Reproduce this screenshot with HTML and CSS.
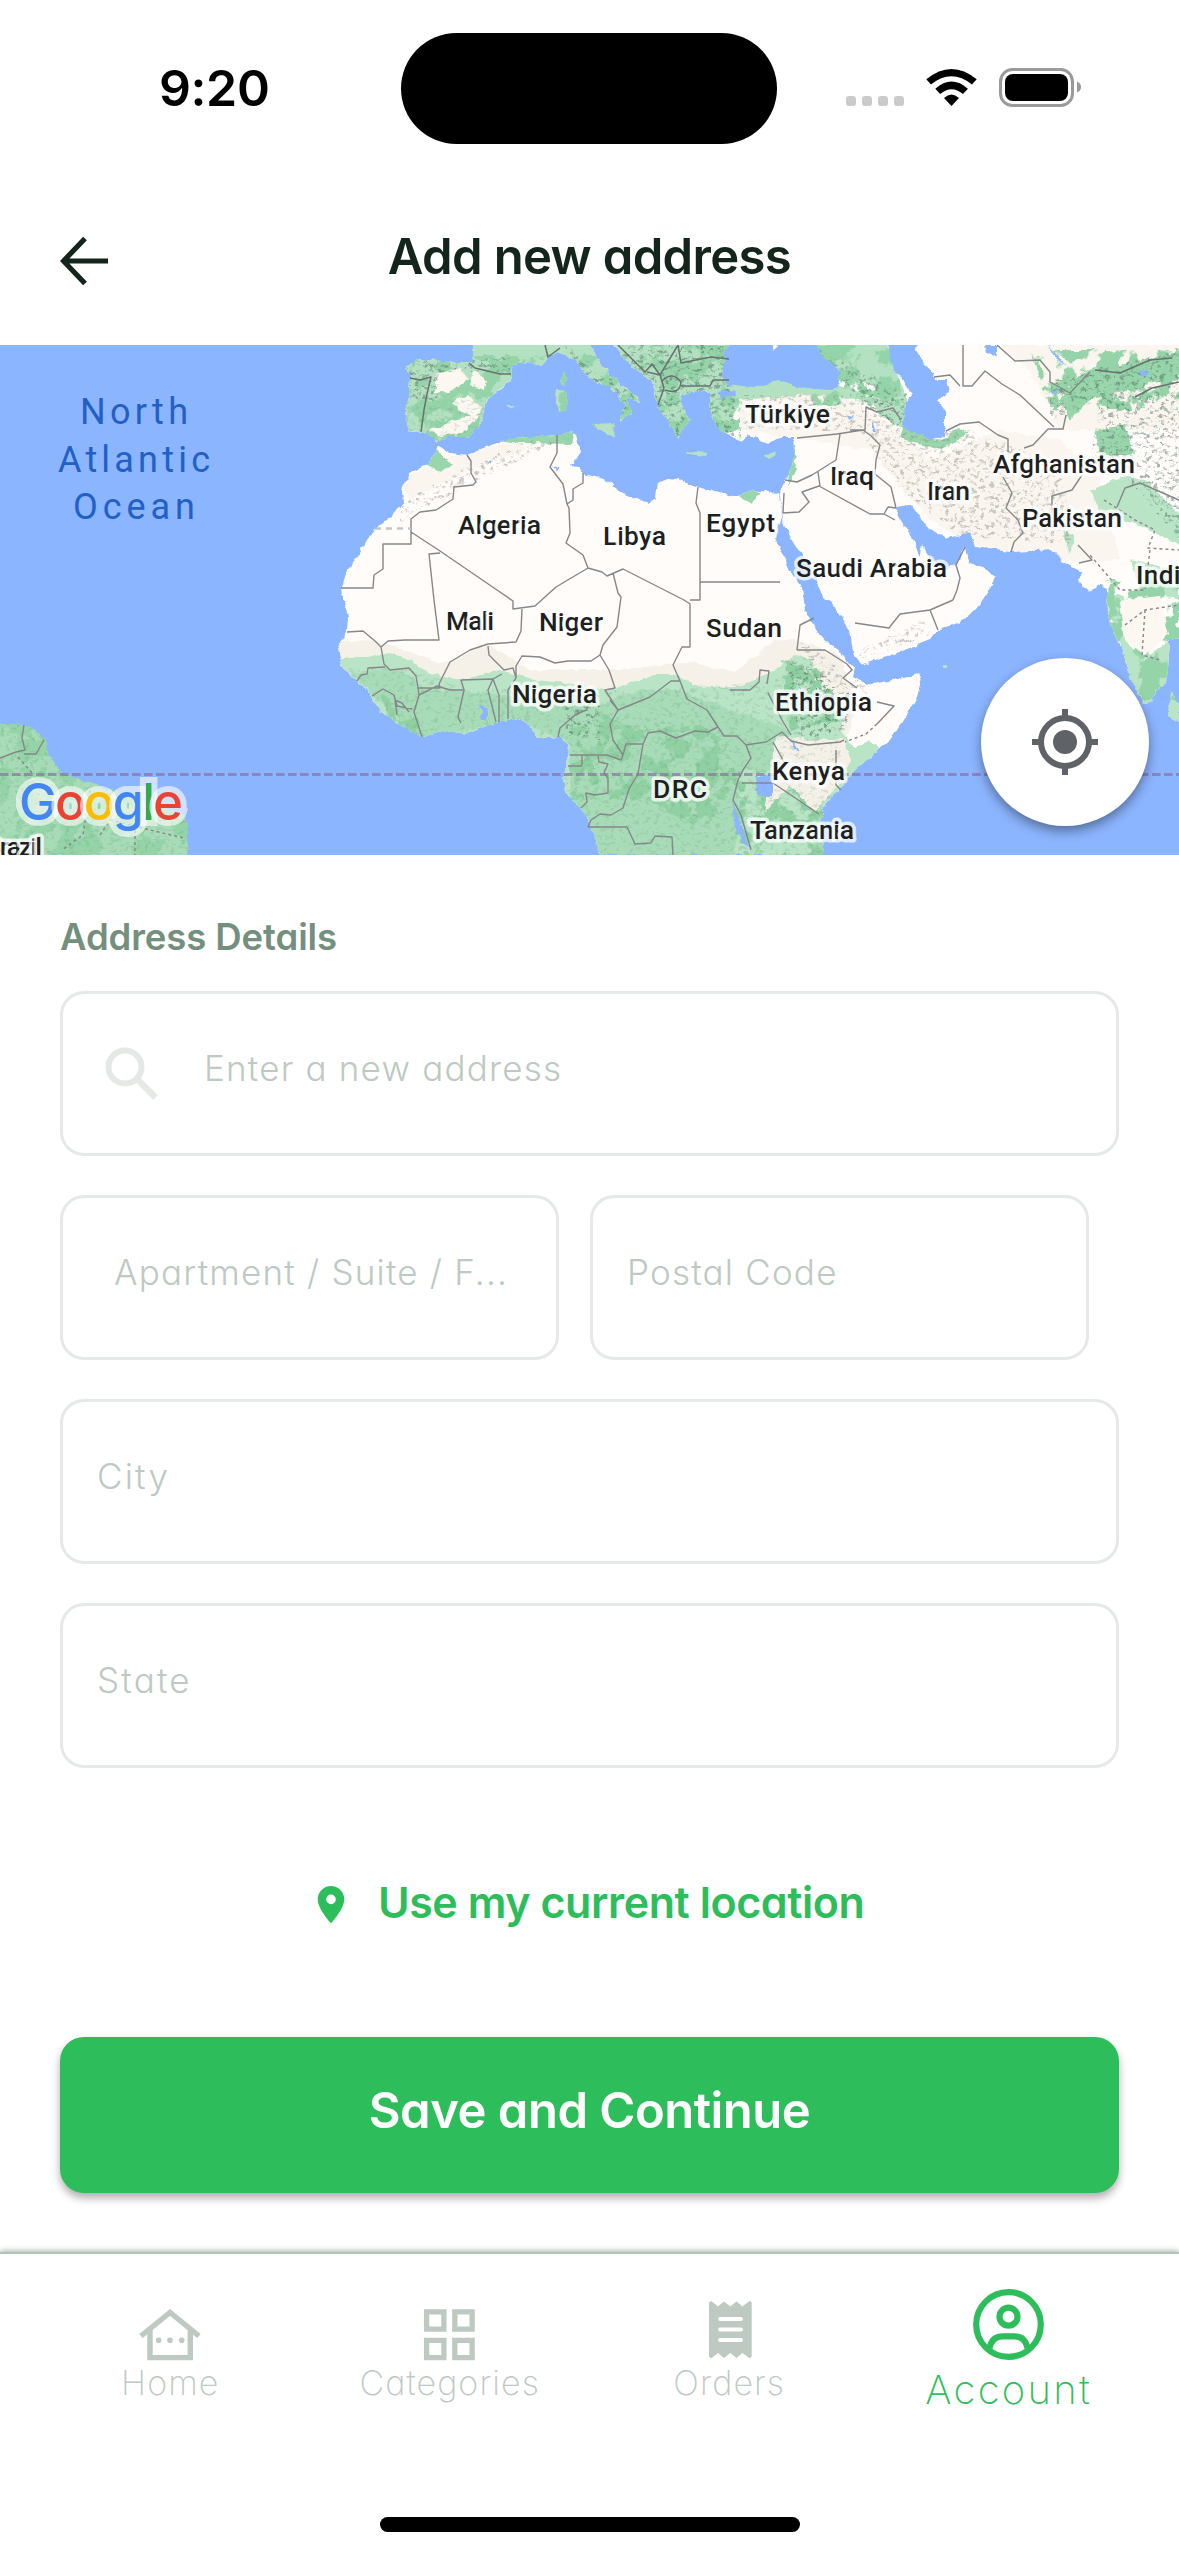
FILE: index.html
```html
<!DOCTYPE html>
<html lang="en">
<head>
<meta charset="utf-8">
<title>Add new address</title>
<link rel="stylesheet" href="styles.css">
</head>
<body>
<div class="screen">
  <div class="status">
    <div class="time">9:20</div>
    <div class="island"></div>
    <svg class="status-icons" viewBox="840 60 250 56">
      <g fill="#cbcbcb"><rect x="846" y="96" width="10" height="10" rx="3"/><rect x="862" y="96" width="10" height="10" rx="3"/><rect x="878" y="96" width="10" height="10" rx="3"/><rect x="894" y="96" width="10" height="10" rx="3"/></g>
      <path d="M926.3 79.3Q951.500 58.500 976.700 79.300L972 84.500Q951.500 68 931 84.500ZM935.300 88.700Q951.500 74.500 967.900 88.700L963 93.900Q951.500 84.500 940.300 93.900ZM944 98Q951.500 91 959 98L951.500 106Z"/>
      <rect x="1000.500" y="69.500" width="72" height="36" rx="12" fill="none" stroke="#9a9a9a" stroke-width="3"/>
      <rect x="1005" y="74" width="63" height="27" rx="8"/>
      <path d="M1077 81.500Q1081 83 1081 87T1077 92.500Z" fill="#9a9a9a"/>
    </svg>
  </div>
  <header class="header">
    <svg class="back" viewBox="0 0 48 50"><path d="M48 25H4M25 2.500L3.500 25L25 47.500" fill="none" stroke="#14251c" stroke-width="5.200"/></svg>
    <h1>Add new address</h1>
  </header>
  <div class="map">
    <svg class="map-art" viewBox="0 345 1179 510">
      <defs>
        <filter id="rough" x="0" y="345" width="1179" height="510" filterUnits="userSpaceOnUse"><feTurbulence type="fractalNoise" baseFrequency=".11" numOctaves="3" seed="4"/><feDisplacementMap in="SourceGraphic" scale="6" xChannelSelector="R" yChannelSelector="G"/></filter>
        <filter id="patchy" x="0" y="345" width="1179" height="510" filterUnits="userSpaceOnUse"><feTurbulence type="fractalNoise" baseFrequency=".05" numOctaves="4" seed="9" result="n"/><feColorMatrix in="n" values="0 0 0 0 0  0 0 0 0 0  0 0 0 0 0  14 0 0 0 -6.6" result="m"/><feComposite in="SourceGraphic" in2="m" operator="in"/></filter>
        <filter id="relief" x="0" y="345" width="1179" height="510" filterUnits="userSpaceOnUse"><feTurbulence type="fractalNoise" baseFrequency=".2 .28" numOctaves="3" seed="21" result="n"/><feColorMatrix in="n" values="0 0 0 0 0  0 0 0 0 0  0 0 0 0 0  0 5 0 0 -2.65" result="m"/><feComposite in="SourceGraphic" in2="m" operator="in"/></filter>
        <clipPath id="land">
          <path id="africa" d="M438 446L450 453 467 455 487 447 507 438 533 437 557 435 572 432 578 437 576 443 581 452 572 465 583 473 612 483 620 493 637 498 648 503 656 498 658 483 670 478 682 480 698 487 733 497 740 495 752 490 777 493 783 513 780 524 775 537 790 570 802 587 805 610 818 633 827 643 840 652 855 668 853 677 867 685 883 682 907 677 920 673 922 678 917 697 903 720 890 740 870 757 853 772 838 790 827 803 820 820 822 837 823 855H600L597 840 588 820 580 808 567 795 563 780 567 763 568 745 560 737 537 738 528 723 513 719 487 725 468 734 447 731 422 737 397 723 373 703 372 695 357 680 343 668 338 647 347 632 348 617 341 590 347 570 360 553 367 540 375 527 390 518 403 503 402 490 410 473 430 463Z"/>
          <path id="eurasia" d="M473 340V362L443 362 417 359 407 367 410 377 409 397 405 417 410 433 428 432 435 443 447 437 467 437 483 420 487 400 503 387 513 377 512 365 530 362 540 366 557 352 572 357 587 377 610 388 625 403 620 422 632 412 625 398 642 402 620 383 602 367 590 345V340H613V345L633 367 653 383 657 403 670 423 678 438 682 430 690 420 680 397 697 390 710 393 710 410 717 427 740 442 750 435 767 443 780 437 793 437 793 463 783 487 778 493 783 513 782 523 797 547 813 570 823 597 837 610 850 630 853 653 860 665 897 653 930 640 938 630 967 618 978 607 987 593 995 578 987 570 968 562 965 547 957 563 945 570 930 560 923 545 920 557 913 540 900 520 895 507 912 505 927 527 947 538 970 533 975 547 1010 552 1053 550 1063 563 1083 573 1077 580 1088 592 1103 583 1107 590 1108 617 1120 647 1130 677 1143 703 1152 702 1157 690 1167 683 1170 640 1185 637V340Z"/>
          <path id="america" d="M-8 723L23 724 45 738 50 755 60 772 72 778 90 782 110 790 143 800 182 815 188 830 188 847 184 860H-8Z"/>
          <path id="isles" d="M564 371L567 382 564 386 560 381ZM557 390L567 391 566 411 558 411 556 398ZM593 424L615 423 614 437 597 430ZM507 405L514 405 511 409ZM687 451L707 453 705 456 688 454ZM763 457L776 451 774 457 767 459ZM1170 692L1180 704V723L1168 717ZM942 666H947V669H942Z"/>
        </clipPath>
      </defs>
      <rect y="345" width="1179" height="510" fill="#8cb5ff"/>
      <g filter="url(#rough)">
        <g fill="#fffcf9"><use href="#africa"/><use href="#eurasia"/></g>
        <use href="#america" fill="#a8dcb8"/><use href="#isles" fill="#b6e2c3"/>
        <g clip-path="url(#land)">
          <g fill="#f6f1e8">
            <path d="M330 642L375 640 405 650 440 664 490 645 530 670 620 670 690 662 735 672 775 640 800 640 840 655 850 690 855 710 820 830 700 790 500 710 330 690Z"/>
            <path opacity=".6" d="M400 480L440 460 480 450 520 438 525 450 470 470 410 500ZM740 390H830L900 430 930 460 1000 430 1060 440 1100 480 1120 560 1060 560 970 545 930 520 870 450 740 430ZM1000 345H1179V430H1060L1030 370Z"/>
          </g>
          <path fill="#b9e4c6" d="M335 658L367 658 390 653 413 662 427 672 460 680 500 670 535 680 566 683 610 690 653 675 677 675 700 687 740 686 765 676 796 655 813 660 815 690 844 716 840 730 855 748 870 740 880 750 850 780 838 800 835 870H560L330 740Z"/>
          <path fill="#a8dcb8" d="M350 672L400 670 430 690 480 692 540 700 600 705 640 690 680 690 730 710 790 730 780 770 740 770 735 855H570V745L520 720 420 740Z"/>
          <g filter="url(#patchy)"><path fill="#90d0a3" d="M570 700L640 730 700 725 740 750 735 800 700 830 650 800 570 800ZM380 695L430 720V742L390 720ZM780 660L820 670 845 720 790 730ZM735 770H830V855H735Z"/></g>
          <path fill="#f6f1e8" d="M775 735L810 740 845 740 850 760 838 785 815 812 790 785 775 800 765 812 770 780Z"/>
          <path fill="#b4e1c1" d="M400 340H595L645 405 620 425 570 365 513 378 487 400 483 422 467 437 435 445 405 435ZM610 340H740L735 400 712 400 678 440 655 400ZM710 395L735 385 780 376 840 385 880 400 900 390 920 420 905 430 880 415 870 400 800 395 740 400 725 438 710 425ZM812 340H885L905 395 870 385 830 375Z"/>
          <path fill="#9ad6ac" d="M434 446L452 466 440 472 425 465ZM495 440L520 436 575 430 572 444 520 443ZM904 425L940 442 955 430 970 432 940 450 900 438ZM793 437L797 470 788 487 790 440ZM738 496L752 488 762 493 750 504ZM1060 400L1080 375 1120 365 1185 350V375L1140 385 1090 400 1070 420ZM1095 430L1125 425 1135 455 1100 455Z"/>
          <path fill="#b9e4c6" d="M1090 490L1125 475 1145 480 1180 515V545L1140 525 1100 515ZM1105 590L1130 600 1125 640 1145 660 1170 640 1180 637V720H1140ZM1062 530L1075 535 1070 555ZM1130 560L1179 570V600L1140 590Z"/>
          <g filter="url(#patchy)" fill="#95d4a8"><path d="M405 355H640V440H405ZM640 345H740V440H640ZM812 345H900V405H812ZM1030 350H1179V410H1050ZM0 720H190V855H0ZM1105 580H1179V700H1110Z"/></g>
          <path fill="#fcf7f0" d="M435 375L458 368 470 378 450 392 435 392ZM473 370L487 380 485 390 470 385ZM452 402L468 395 482 408 474 418 458 410ZM430 430L462 418 480 415 462 432 440 436ZM1120 600L1160 595 1168 635 1145 655 1125 640Z"/>
          <g filter="url(#relief)">
            <path fill="#8a8a80" opacity=".45" d="M740 395H890L905 430 970 430 1020 450 1060 470 1075 545 960 535 900 490 860 430H740ZM400 505L460 470 530 440 560 440 520 460 440 500 400 520ZM815 590L850 625 860 660 930 635 925 620 860 650 840 610ZM800 640L870 690 830 740 800 700Z"/>
            <path fill="#4f6b62" opacity=".5" d="M405 358H510V372H440V400H410ZM565 345L640 400 625 420 570 365ZM612 345H735V440H670ZM810 345L910 395 900 430 850 390ZM1050 380L1179 350V540L1130 480 1090 460 1100 400 1050 420ZM785 655L850 690 845 730 800 740ZM560 690H600V740H570Z"/>
            <path fill="#5c9474" opacity=".22" d="M340 670L400 665 470 690 640 690 780 680 840 690V855H560ZM405 400H485V440H405ZM0 720H190V855H0Z"/>
          </g>
        </g>
        <g fill="#8cb5ff">
          <path d="M725 352L740 340H773V350L783 340H812L823 357 840 372 838 387 830 390 797 387 777 380 750 388 730 385 722 378ZM718 392L735 390 734 395 720 397Z"/>
          <path d="M887 340L893 367 912 395 905 403 903 427 917 435 933 440 945 437 945 410 937 400 950 393 947 380 935 380 933 372 923 363 915 348 923 340Z"/>
          <path d="M756 775H773V795H757ZM985 345H997V357L987 352ZM1048 345L1066 366 1055 358ZM733 800L740 825 751 848 744 844 735 828ZM478 703L487 708 487 719 480 719 484 713ZM489 460L494 462 489 464ZM552 466L561 467 558 471ZM847 413L854 417 849 420ZM872 422L876 430 872 430ZM1050 391L1062 393 1053 395ZM1138 370L1152 373 1142 377ZM792 738L799 752 794 748Z"/>
        </g>
      </g>
      <g fill="none" stroke="#858789" stroke-width="1.400" stroke-linejoin="round">
        <path d="M467 455L471 461 471 473 476 482 473 485 454 487 453 499 436 510 420 512 411 519V544H383V569L374 575 373 588H341M411 532L440 551 497 590 513 601V609L535 606 556 587 588 568 583 555 566 543 570 533 569 508 567 504 563 484 550 467 557 453V435M567 504L573 500V489L583 483V473M440 553L429 554 434 600 439 640H405L388 641 381 647 384 664 390 670 409 668 416 676 418 688 419 695 414 712 422 737M347 632L363 631 375 641 381 647M522 609L521 631 516 642 488 644 470 650 450 662 439 684 440 688 418 688M488 646L489 655 504 670 513 668 516 678M516 678L516 666 522 656 540 657 555 663 568 661 591 661 600 655M588 568L602 572 607 576 623 569 684 600 690 604V647L682 647 673 665 680 681 671 681 650 697 618 710 610 700M613 573L618 593 621 597 617 627 603 645 600 655 609 670 615 688 605 690 618 710 610 724 613 740 623 755 621 760 607 755H570M698 487L696 503 700 513V600H690M700 582H780M461 723L458 717 464 690 461 680 493 679 488 690 496 722M499 722V695L493 679 502 674M508 719V690L516 678M558 737L560 728 575 715 586 710 590 703M419 695L437 686 450 690 463 690M397 715L395 700 402 703 409 712M372 696L383 689 394 695 397 706 412 709M357 681L361 675 367 674 368 668 385 667M680 681L687 699 707 710 718 727 708 732 695 731 676 738 660 731 648 733 643 744 626 744 623 755M643 744L638 774 629 789 623 808 611 815 600 814 591 820 588 827M582 765V755M568 766H582M598 756L599 762 608 764 604 773 608 778 608 793 595 795 586 793 587 802 581 808M588 827H627L635 844 651 843 655 836 672 837 673 855M718 727L724 736 737 736 746 745 766 742 782 732 791 741 808 745 840 742 844 740M836 750V785L841 790M773 742L784 762M746 745L751 758 743 770 738 780 733 800 741 815 751 850M742 783H773L819 814M768 693L782 720 791 735M797 650L800 625 814 618M797 650L825 650 847 664 852 670 843 678 857 688 M877 702L894 706 877 724M730 690L750 690 759 682 760 670 769 671 767 684M784 493L783 513 799 512 809 502 802 492 819 486 870 514 884 514 895 520M884 514L888 507 896 508 891 487 875 474 876 460 880 445 870 435 863 430 837 434 797 438M840 434L836 460 812 475 797 482 785 480M818 472L820 486M850 430L865 430 866 407 877 412 893 408 901 420M953 600L957 590 960 578 956 565 965 547M953 600L930 610 900 614 889 628 855 623M930 610L938 630M946 431L960 424 979 422 998 435 1008 439 1008 452M1024 448L1033 445 1048 429 1063 429 1066 415M963 345V386H972L985 371 1002 384 1020 395 1054 427M934 377L950 375 960 386M997 345L1015 361 1040 360 1050 372 1050 382 1070 393 1090 372M1003 477L1012 493 1006 508 1018 520 1023 533 1014 542 1011 552M1052 516L1052 496 1072 490 1082 475M1179 500L1140 483 1125 488 1117 507M1078 545L1092 560 1079 563"/>
        <path stroke-dasharray="3 3" d="M1104 500L1135 520 1155 530 1148 548 1179 550M1150 550L1145 590 1120 590 1090 555M1145 610L1142 655 1160 660M1125 625L1145 610 1179 605M18 757L34 775M90 790L83 835 62 850M100 835L110 820 150 830 184 838M135 800V855M877 724L866 734 845 742"/>
        <path d="M24 725L22 738 25 750 16 752 0 758M24 754L36 754 44 740"/>
        <path stroke="#c4c5c6" stroke-width="2.500" stroke-dasharray="6 5" d="M375 528.500H411"/>
      </g>
      <g fill="none" stroke="#68716f" stroke-width="1.500" stroke-linejoin="round"><path d="M469 363L475 368 500 374 511 374M410 378L420 380 431 377 427 394 424 410 421 432M545 345L548 357 560 348M618 345L645 372 652 364 660 375 678 345 681 363 711 357 729 359M647 372L660 375 664 388 658 405M661 382Q672 370 681 382Q680 395 665 390M681 386L710 386 713 380 729 380M1095 370L1120 373 1150 360 1172 358M1135 397L1152 388 1179 382"/></g>
      <path d="M0 774.500H1179" stroke="#8b6fa0" stroke-opacity=".68" stroke-width="2.800" stroke-dasharray="8.500 3.500" fill="none"/>
      <g class="country">
        <text x="458" y="534" textLength="83">Algeria</text>
        <text x="603" y="544.500" textLength="63">Libya</text>
        <text x="706" y="532" textLength="69">Egypt</text>
        <text x="446" y="630" textLength="48">Mali</text>
        <text x="539" y="630.500" textLength="64">Niger</text>
        <text x="706" y="637" textLength="76">Sudan</text>
        <text x="512" y="702.500" textLength="85">Nigeria</text>
        <text x="653" y="798" textLength="54">DRC</text>
        <text x="775" y="710.500" textLength="97">Ethiopia</text>
        <text x="772" y="780" textLength="73">Kenya</text>
        <text x="750" y="838.500" textLength="104">Tanzania</text>
        <text x="745" y="423" textLength="85">Türkiye</text>
        <text x="830" y="485" textLength="44">Iraq</text>
        <text x="927" y="500" textLength="43">Iran</text>
        <text x="993" y="472.500" textLength="142">Afghanistan</text>
        <text x="1022" y="526.500" textLength="100">Pakistan</text>
        <text x="796" y="577" textLength="151">Saudi Arabia</text>
        <text x="1136" y="583.500" textLength="59">India</text>
        <text x="-15" y="856" textLength="57">Brazil</text>
      </g>
      <g class="ocean">
        <text x="80" y="424" textLength="108">North</text>
        <text x="58" y="472" textLength="152">Atlantic</text>
        <text x="73" y="519" textLength="122">Ocean</text>
      </g>
      <text class="brand" x="19" y="819.500" textLength="164"><tspan fill="#4285f4">G</tspan><tspan fill="#ea4335">o</tspan><tspan fill="#fbbc05">o</tspan><tspan fill="#4285f4">g</tspan><tspan fill="#34a853">l</tspan><tspan fill="#ea4335">e</tspan></text>
    </svg>
    <div class="locate">
      <svg viewBox="0 0 66 66"><g fill="none" stroke="#5f6368" stroke-width="6"><circle cx="33" cy="33" r="24"/><path d="M33 0V8M33 58V66M0 33H8M58 33H66"/></g><circle cx="33" cy="33" r="12" fill="#5f6368"/></svg>
    </div>
  </div>
  <main class="form">
    <h2>Address Details</h2>
    <div class="fields">
      <div class="field search">
        <svg viewBox="0 0 54 54"><g fill="none" stroke="#e4e9e6" stroke-width="6"><circle cx="20" cy="20" r="16.500"/><path d="M32 32L50.500 50.500" stroke-width="6.500"/></g></svg>
        <span>Enter a new address</span>
      </div>
      <div class="pair">
        <div class="field apt"><span>Apartment / Suite / F...</span></div>
        <div class="field postal"><span>Postal Code</span></div>
      </div>
      <div class="field short"><span>City</span></div>
      <div class="field short"><span>State</span></div>
    </div>
    <div class="current">
      <svg viewBox="0 0 28 38"><path fill-rule="evenodd" d="M14 0A13.300 13.300 0 0 0 .7 13.300C.7 23 14 37.500 14 37.500S27.300 23 27.300 13.300A13.300 13.300 0 0 0 14 0ZM14 8.600A4.800 4.800 0 1 1 14 18.200A4.800 4.800 0 0 1 14 8.600Z" fill="#2ebd5b"/></svg>
      <span>Use my current location</span>
    </div>
    <div class="save"><span>Save and Continue</span></div>
  </main>
  <nav class="nav">
    <div class="tab">
      <svg viewBox="0 0 72 72"><g fill="none" stroke="#bec9c2" stroke-width="5.400"><path d="M7 47L36 23.500 65 47M16 40V68.600H56.300V40"/></g><g fill="#bec9c2"><circle cx="24.700" cy="51.300" r="2.800"/><circle cx="36" cy="51.300" r="2.800"/><circle cx="47.700" cy="51.300" r="2.800"/></g></svg>
      <span>Home</span>
    </div>
    <div class="tab">
      <svg viewBox="0 0 72 72"><g fill="none" stroke="#bec9c2" stroke-width="5.300"><path d="M13.600 22.800h17.300v17.300H13.600ZM41.800 22.800h17.300v17.300H41.800ZM13.600 51.400h17.300v17.300H13.600ZM41.800 51.400h17.300v17.300H41.800Z"/></g></svg>
      <span>Categories</span>
    </div>
    <div class="tab">
      <svg viewBox="0 0 72 72"><path d="M16 14Q17 11 19.500 13L25 17.500 31 12.500 37.300 17.500 43.500 12.500 49.500 17.500 55.500 12.700Q58 11 58.700 14V67Q58 70 55.500 68.500L49.500 64 43.500 69 37.300 64 31 69 25 64 19.500 68.500Q17 70 16 67Z" fill="#bec9c2"/><path d="M27 30H48M27 40.500H48M27 51H48" stroke="#fff" stroke-width="4" stroke-linecap="round"/></svg>
      <span>Orders</span>
    </div>
    <div class="tab active">
      <svg viewBox="0 0 72 72"><g fill="none" stroke="#2ebd5b" stroke-width="6.200"><circle cx="36.500" cy="35.500" r="32.300"/><circle cx="36.500" cy="27.700" r="9"/><path d="M17.500 59Q20 47.300 30.500 47.300H42.500Q53 47.300 55.500 59"/></g></svg>
      <span>Account</span>
    </div>
  </nav>
  <div class="home-bar"></div>
</div>
</body>
</html>
```
FILE: styles.css
```css
* { box-sizing: border-box; }
body {
  margin: 0;
  background: #fff;
  font-family: Inter, "Liberation Sans", sans-serif;
  font-feature-settings: "cv11";
}
svg { display: block; flex: none; }
span, h1, h2 { white-space: nowrap; }
.screen {
  width: 1179px;
  height: 2556px;
  overflow: hidden;
  display: flex;
  flex-direction: column;
}
.status {
  height: 168px;
  padding: 33px 89px 0 0;
  display: flex;
  align-items: flex-start;
}
.time {
  width: 401px;
  padding-left: 159px;
  font-size: 50px;
  font-weight: 600;
  line-height: 110px;
  letter-spacing: -.4px;
}
.island {
  width: 376px;
  height: 111px;
  border-radius: 56px;
  background: #000;
}
.status-icons { width: 250px; height: 56px; margin: 27px 0 0 63px; }
.header {
  height: 177px;
  padding: 0 60px;
  display: grid;
  grid-template-columns: 48px 1fr 48px;
  align-items: center;
}
.back { width: 48px; height: 50px; margin-top: 8px; }
h1 {
  margin: 0;
  text-align: center;
  font-size: 49px;
  font-weight: 580;
  line-height: 60px;
  color: #14251c;
  letter-spacing: -0.65px;
}
.map { position: relative; height: 510px; }
.map-art { width: 1179px; height: 510px; }
.country text {
  font: 500 26.500px Roboto, sans-serif;
  fill: #1d1f21;
  stroke: #fff;
  stroke-opacity: .75;
  stroke-width: 7px;
  stroke-linejoin: round;
  paint-order: stroke;
}
.ocean text { font: 400 36px Roboto, sans-serif; fill: #2260c4; }
.brand {
  font: 550 51px Inter, sans-serif;
  stroke: #fff;
  stroke-opacity: .6;
  stroke-width: 12px;
  paint-order: stroke;
}
.locate {
  position: absolute;
  left: 981px;
  top: 313px;
  width: 168px;
  height: 168px;
  border-radius: 50%;
  background: #fff;
  box-shadow: 0 5px 12px rgba(0, 0, 0, .4);
  display: grid;
  place-items: center;
}
.locate svg { width: 66px; height: 66px; }
.form { height: 1397px; padding: 60px 60px 0; }
h2 {
  margin: 0 0 32px;
  font-size: 36.500px;
  font-weight: 580;
  line-height: 44px;
  letter-spacing: -.1px;
  color: #748f7e;
}
.fields { display: flex; flex-direction: column; gap: 39px; }
.field {
  height: 165px;
  border: 3px solid #e5e9e7;
  border-radius: 24px;
  padding: 0 34px 12px;
  display: flex;
  align-items: center;
  font-size: 35px;
  font-weight: 350;
  color: #bdc9c1;
  letter-spacing: 1.2px;
}
.short { letter-spacing: 2.2px; }
.search { padding-left: 42px; gap: 45px; }
.search svg { width: 54px; height: 54px; margin-top: 13px; }
.pair { display: grid; grid-template-columns: 499px 499px; gap: 31px; }
.apt { padding: 0 0 12px 51px; }
.current {
  height: 269px;
  display: flex;
  align-items: center;
  padding: 0 0 2px 257px;
  gap: 33px;
  font-size: 43px;
  font-weight: 580;
  letter-spacing: -.45px;
  color: #2ebd5b;
}
.current svg { width: 28px; height: 38px; margin-top: 6px; }
.save {
  height: 156px;
  border-radius: 24px;
  background: #2ebd5b;
  box-shadow: 0 5px 9px rgba(0, 0, 0, .32);
  display: flex;
  align-items: center;
  justify-content: center;
  padding-bottom: 10px;
  color: #fff;
  font-size: 49px;
  font-weight: 580;
  letter-spacing: -.5px;
}
.nav {
  height: 264px;
  padding: 35px 30px 0;
  background: #fff;
  box-shadow: 0 -1px 6px #9fb0a6;
  clip-path: inset(-12px 0 0 0);
  border-top: 2px solid #b5c2ba;
  display: grid;
  grid-template-columns: repeat(4, 279.500px);
}
.tab {
  display: flex;
  flex-direction: column;
  align-items: center;
  font-size: 34px;
  font-weight: 250;
  line-height: 44px;
  letter-spacing: 1.1px;
  color: #bec9c2;
}
.tab svg { width: 72px; height: 72px; }
.tab span { margin-right: -1px; }
.tab.active {
  font-size: 40px;
  line-height: 58px;
  letter-spacing: 2.3px;
  color: #2ebd5b;
}
.home-bar {
  width: 420px;
  height: 15px;
  border-radius: 8px;
  background: #000;
  align-self: center;
  margin-top: 1px;
}
```
